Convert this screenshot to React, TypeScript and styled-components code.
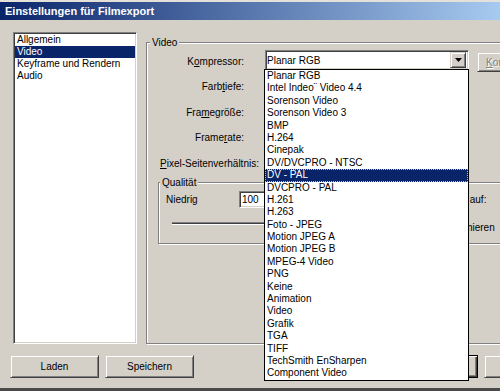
import React from "react";
import styled, { createGlobalStyle } from "styled-components";

const GlobalStyle = createGlobalStyle`
  html, body {
    margin: 0;
    padding: 0;
    background: #d4d0c8;
  }
  body {
    font-family: "Liberation Sans", Arial, sans-serif;
    font-size: 10px;
    color: #000;
  }
`;

const pages = ["Allgemein", "Video", "Keyframe und Rendern", "Audio"];

const codecs = [
  "Planar RGB",
  "Intel Indeo¨ Video 4.4",
  "Sorenson Video",
  "Sorenson Video 3",
  "BMP",
  "H.264",
  "Cinepak",
  "DV/DVCPRO - NTSC",
  "DV - PAL",
  "DVCPRO - PAL",
  "H.261",
  "H.263",
  "Foto - JPEG",
  "Motion JPEG A",
  "Motion JPEG B",
  "MPEG-4 Video",
  "PNG",
  "Keine",
  "Animation",
  "Video",
  "Grafik",
  "TGA",
  "TIFF",
  "TechSmith EnSharpen",
  "Component Video",
];

const Window = styled.div`
  width: 500px;
  height: 391px;
  box-sizing: border-box;
  overflow: hidden;
  background: #d4d0c8;
  border-top: 2px solid #e4e1db;
  border-bottom: 3px solid #4a4a4a;
  display: flex;
  flex-direction: column;
`;

const TitleBar = styled.div`
  height: 18px;
  flex: none;
  display: flex;
  align-items: center;
  padding-left: 5px;
  background: linear-gradient(to right, #0a246a, #a6caf0);
  color: #fff;
  font-weight: bold;
  font-size: 11px;
`;

const Body = styled.div`
  flex: 1;
  display: flex;
  flex-direction: column;
  padding: 12px 0 0 8px;
`;

const ContentRow = styled.div`
  display: flex;
  gap: 9px;
  height: 312px;
  margin-left: 5px;
`;

const Sunken = styled.div`
  box-sizing: border-box;
  border: 1px solid;
  border-color: #808080 #fff #fff #808080;
  box-shadow: inset 1px 1px 0 #404040, inset -1px -1px 0 #d4d0c8;
  background: #fff;
`;

const PageList = styled(Sunken)`
  width: 124px;
  flex: none;
  padding: 1px;
`;

const PageItem = styled.div<{ $active?: boolean }>`
  height: 12px;
  line-height: 12px;
  padding-left: 2px;
  white-space: nowrap;
  background: ${(p) => (p.$active ? "#0a246a" : "transparent")};
  color: ${(p) => (p.$active ? "#fff" : "#000")};
`;

const Group = styled.fieldset<{ $width: number; $height?: number }>`
  box-sizing: border-box;
  margin: 0;
  padding: 0;
  min-width: 0;
  width: ${(p) => p.$width}px;
  ${(p) => (p.$height ? `height: ${p.$height}px;` : "")}
  flex: none;
  border: 1px solid #808080;
  box-shadow: inset 1px 1px 0 #fff, 1px 1px 0 #fff;
`;

const VideoGroup = styled(Group)`
  margin-top: 4.5px;
`;

const Legend = styled.legend<{ $offset: number }>`
  margin-left: ${(p) => p.$offset}px;
  padding: 0 2px;
  line-height: 12px;
  background: #d4d0c8;
`;

const GroupInner = styled.div`
  padding: 1.5px 0 0 11px;
`;

const FieldGrid = styled.div`
  display: grid;
  grid-template-columns: 97px 204px 90px;
  grid-auto-rows: 22px;
  column-gap: 8px;
  row-gap: 3.5px;
  margin-left: 2px;
`;

const FieldLabel = styled.div`
  padding-right: 13px;
  text-align: right;
  white-space: nowrap;
  align-self: center;
`;

const Combo = styled(Sunken)`
  position: relative;
  height: 20px;
  display: flex;
  align-items: center;
  padding-left: 1px;
`;

const ComboText = styled.span`
  flex: 1;
  white-space: nowrap;
`;

const Raised = styled.div`
  box-sizing: border-box;
  border: 1px solid;
  border-color: #d4d0c8 #404040 #404040 #d4d0c8;
  box-shadow: inset 1px 1px 0 #fff, inset -1px -1px 0 #808080;
  background: #d4d0c8;
`;

const ArrowButton = styled(Raised)`
  width: 16px;
  height: 16px;
  margin-right: 2px;
  margin-left: auto;
  display: flex;
  align-items: center;
  justify-content: center;
`;

const DropList = styled.div`
  position: absolute;
  top: 100%;
  left: -2px;
  width: 205px;
  box-sizing: border-box;
  border: 1px solid #000;
  background: #fff;
  z-index: 5;
`;

const DropItem = styled.div<{ $active?: boolean }>`
  height: 12.4px;
  line-height: 12.4px;
  padding-left: 2px;
  white-space: nowrap;
  background: ${(p) => (p.$active ? "#0a246a" : "#fff")};
  color: ${(p) => (p.$active ? "#fff" : "#000")};
  outline: ${(p) => (p.$active ? "1px dotted #c9c39a" : "none")};
  outline-offset: -1px;
`;

const Button = styled(Raised)<{ $width?: number }>`
  width: ${(p) => p.$width ?? 89}px;
  height: 23px;
  display: flex;
  align-items: center;
  justify-content: center;
  flex: none;
  white-space: nowrap;
`;

const SideButton = styled(Raised)`
  width: 90px;
  height: 20px;
  align-self: end;
  display: flex;
  align-items: center;
  padding-left: 8px;
  white-space: nowrap;
  color: #808080;
  text-shadow: 1px 1px 0 #fff;
`;

const DefaultButton = styled(Button)`
  border-color: #000;
  box-shadow: inset 1px 1px 0 #fff, inset -1px -1px 0 #404040,
    inset -2px -2px 0 #808080;
`;

const Key = styled.span`
  text-decoration: underline;
`;

const LowerRow = styled.div`
  display: flex;
  gap: 8px;
  margin-top: 2.5px;
`;

const QualityInner = styled.div`
  padding: 2.5px 0 0 7px;
`;

const QualityRow = styled.div`
  display: flex;
  align-items: center;
  height: 17px;
`;

const QualityLabel = styled.span`
  width: 73px;
  flex: none;
`;

const NumberBox = styled(Sunken)`
  width: 40px;
  height: 17px;
  padding: 0 2px;
  display: flex;
  align-items: center;
`;

const HighLabel = styled.span`
  margin-left: auto;
  margin-right: 8px;
`;

const SliderTrack = styled.div`
  position: relative;
  margin: 14px 10px 0 6px;
  height: 1px;
  border-top: 1px solid #808080;
  border-bottom: 1px solid #fff;
  background: #404040;
`;

const SliderThumb = styled(Raised)`
  position: absolute;
  right: -5px;
  top: -10px;
  width: 11px;
  height: 21px;
`;

const RateInner = styled.div`
  padding: 2.5px 0 0 5px;
  display: flex;
  flex-direction: column;
  gap: 11px;
`;

const CheckRow = styled.div<{ $indent: number }>`
  display: flex;
  align-items: center;
  gap: 4px;
  height: 17px;
  padding-left: ${(p) => p.$indent}px;
  white-space: nowrap;
`;

const CheckBox = styled(Sunken)`
  width: 13px;
  height: 13px;
  flex: none;
`;

const ButtonRow = styled.div`
  display: flex;
  gap: 6px;
  margin: 11px 0 0 2px;
`;

const RightButtons = styled.div`
  display: flex;
  gap: 6px;
  margin-left: 189px;
`;

const DownArrow = () => (
  <svg width="7" height="4" viewBox="0 0 7 4">
    <path d="M0 0H7L3.5 4Z" fill="#000" />
  </svg>
);

const Field = ({ label }: { label: React.ReactNode }) => (
  <>
    <FieldLabel>{label}</FieldLabel>
    <Combo>
      <ArrowButton>
        <DownArrow />
      </ArrowButton>
    </Combo>
    <div />
  </>
);

export default function App() {
  return (
    <>
      <GlobalStyle />
      <Window>
        <TitleBar>Einstellungen für Filmexport</TitleBar>
        <Body>
          <ContentRow>
            <PageList>
              {pages.map((p) => (
                <PageItem key={p} $active={p === "Video"}>
                  {p}
                </PageItem>
              ))}
            </PageList>
            <VideoGroup $width={380}>
              <Legend $offset={3}>Video</Legend>
              <GroupInner>
                <FieldGrid>
                  <FieldLabel>
                    K<Key>o</Key>mpressor:
                  </FieldLabel>
                  <Combo>
                    <ComboText>Planar RGB</ComboText>
                    <ArrowButton>
                      <DownArrow />
                    </ArrowButton>
                    <DropList>
                      {codecs.map((c) => (
                        <DropItem key={c} $active={c === "DV - PAL"}>
                          {c}
                        </DropItem>
                      ))}
                    </DropList>
                  </Combo>
                  <SideButton>
                    <span>
                      <Key>K</Key>onfigurieren...
                    </span>
                  </SideButton>

                  <Field
                    label={
                      <>
                        Farb<Key>t</Key>iefe:
                      </>
                    }
                  />
                  <Field
                    label={
                      <>
                        Fra<Key>m</Key>egröße:
                      </>
                    }
                  />
                  <Field
                    label={
                      <>
                        Frame<Key>r</Key>ate:
                      </>
                    }
                  />
                  <Field
                    label={
                      <>
                        <Key>P</Key>ixel-Seitenverhältnis:
                      </>
                    }
                  />
                </FieldGrid>

                <LowerRow>
                  <Group $width={184} $height={67}>
                    <Legend $offset={1}>Qualität</Legend>
                    <QualityInner>
                      <QualityRow>
                        <QualityLabel>Niedrig</QualityLabel>
                        <NumberBox>100</NumberBox>
                        <HighLabel>Hoch</HighLabel>
                      </QualityRow>
                      <SliderTrack>
                        <SliderThumb />
                      </SliderTrack>
                    </QualityInner>
                  </Group>
                  <Group $width={200} $height={67}>
                    <Legend $offset={4}>Datenrate</Legend>
                    <RateInner>
                      <CheckRow $indent={0}>
                        <CheckBox />
                        <span>Datenrate begrenzen auf:</span>
                      </CheckRow>
                      <CheckRow $indent={40}>
                        <CheckBox />
                        <span>Neu komprimieren</span>
                      </CheckRow>
                    </RateInner>
                  </Group>
                </LowerRow>
              </GroupInner>
            </VideoGroup>
          </ContentRow>

          <ButtonRow>
            <Button>Laden</Button>
            <Button>Speichern</Button>
            <RightButtons>
              <DefaultButton>OK</DefaultButton>
              <Button>Abbrechen</Button>
            </RightButtons>
          </ButtonRow>
        </Body>
      </Window>
    </>
  );
}
